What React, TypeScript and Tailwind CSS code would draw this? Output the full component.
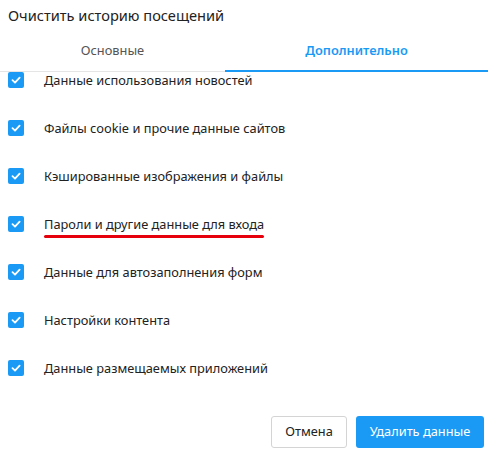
import React, { useState } from 'react';

const items = [
  'Данные использования новостей',
  'Файлы cookie и прочие данные сайтов',
  'Кэшированные изображения и файлы',
  'Пароли и другие данные для входа',
  'Данные для автозаполнения форм',
  'Настройки контента',
  'Данные размещаемых приложений',
];

function Checkbox({ checked, onChange }: { checked: boolean; onChange: () => void }) {
  return (
    <button
      onClick={onChange}
      className={`w-4 h-4 shrink-0 rounded-[2px] flex items-center justify-center ${checked ? 'bg-[#1a9af5]' : 'border border-gray-400 bg-white'}`}
    >
      {checked && (
        <svg width="12" height="12" viewBox="0 0 12 12" fill="none">
          <path d="M2.5 6.2 L5 8.6 L9.6 3.6" stroke="white" strokeWidth="1.8" strokeLinecap="round" strokeLinejoin="round" />
        </svg>
      )}
    </button>
  );
}

export default function App() {
  const [tab, setTab] = useState(1);
  const [checked, setChecked] = useState<boolean[]>(items.map(() => true));

  return (
    <div className="w-[488px] h-[454px] bg-white flex flex-col text-[#222] font-['Noto_Sans',sans-serif] overflow-hidden">
      <div className="h-8 pl-2 flex items-center text-[14.6px]">Очистить историю посещений</div>

      <div className="flex border-b border-[#e5e5e5] h-10">
        {['Основные', 'Дополнительно'].map((label, i) => (
          <button
            key={label}
            onClick={() => setTab(i)}
            className={`flex-1 flex items-center justify-center text-[12.8px] border-b-2 -mb-px pb-[1px] ${
              i === 0 ? 'basis-[225px] grow-0' : ''
            } ${tab === i ? 'border-[#1a9af5] text-[#1a9af5] font-semibold' : 'border-transparent text-[#555]'}`}
          >
            {label}
          </button>
        ))}
      </div>

      <div className="h-[320px] overflow-hidden">
        {items.map((label, i) => (
          <div key={label} className={`${i === 0 ? 'h-8 items-start' : 'h-12 items-center'} flex pl-2`}>
            <div className="flex items-center h-4">
              <Checkbox
                checked={checked[i]}
                onChange={() => setChecked(checked.map((c, j) => (j === i ? !c : c)))}
              />
              <span className="ml-5 text-[12.8px] relative pt-[2px] whitespace-nowrap">
                {label}
                {i === 3 && (
                  <span className="absolute left-0 right-0 -bottom-[3px] h-[3px] rounded-full bg-[#e5000b]" />
                )}
              </span>
            </div>
          </div>
        ))}
      </div>

      <div className="flex justify-end gap-[9px] pr-1 mt-6">
        <button className="w-[76px] h-8 rounded-[3px] border border-[#d4d4d4] bg-white text-[12.8px] text-[#222]">
          Отмена
        </button>
        <button className="w-[128px] h-8 rounded-[3px] bg-[#1a9af5] text-white text-[12.8px]">
          Удалить данные
        </button>
      </div>
    </div>
  );
}
